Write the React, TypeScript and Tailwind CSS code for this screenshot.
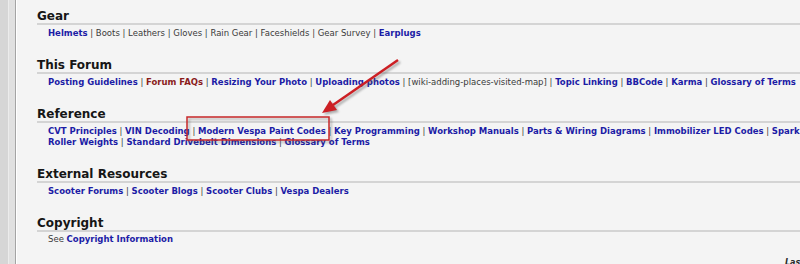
import React from "react";

const font = { fontFamily: '"DejaVu Sans", Verdana, sans-serif' };

function Sep() {
  return <span className="text-[#3a3a3a] font-normal"> | </span>;
}

function L({ children, red }: { children: React.ReactNode; red?: boolean }) {
  return (
    <span className={red ? "text-[#8a1c1c] font-bold" : "text-[#1c1ca6] font-bold"}>{children}</span>
  );
}

function T({ children }: { children: React.ReactNode }) {
  return <span className="text-[#3a3a3a] font-normal">{children}</span>;
}

function Section({ title, children }: { title: string; children: React.ReactNode }) {
  return (
    <div className="mb-[19px]">
      <div className="text-[12px] leading-[14px] font-bold text-[#161616] border-b-2 border-[#d4d4d4]">
        {title}
      </div>
      <div className="mt-[3px] pl-[11px] text-[8.5px] leading-[11px] whitespace-nowrap">{children}</div>
    </div>
  );
}

export default function App() {
  return (
    <div className="relative w-[800px] h-[264px] overflow-hidden flex bg-[#f4f4f4]" style={font}>
      <div className="w-[8px] bg-[#d6d6d6] shrink-0" />
      <div className="w-[1px] bg-[#ececec] shrink-0" />
      <div className="w-[6px] bg-[#e0e0e0] shrink-0" />
      <div className="w-[1px] bg-[#a4a4a4] shrink-0" />
      <div className="w-[1px] bg-white shrink-0" />
      <div className="flex-1 min-w-0 pl-[20px] pt-[9px] overflow-hidden">
        <Section title="Gear">
          <L>Helmets</L>
          <Sep />
          <T>Boots</T>
          <Sep />
          <T>Leathers</T>
          <Sep />
          <T>Gloves</T>
          <Sep />
          <T>Rain Gear</T>
          <Sep />
          <T>Faceshields</T>
          <Sep />
          <T>Gear Survey</T>
          <Sep />
          <L>Earplugs</L>
        </Section>
        <Section title="This Forum">
          <L>Posting Guidelines</L>
          <Sep />
          <L red>Forum FAQs</L>
          <Sep />
          <L>Resizing Your Photo</L>
          <Sep />
          <L>Uploading photos</L>
          <Sep />
          <T>[wiki-adding-places-visited-map]</T>
          <Sep />
          <L>Topic Linking</L>
          <Sep />
          <L>BBCode</L>
          <Sep />
          <L>Karma</L>
          <Sep />
          <L>Glossary of Terms</L>
        </Section>
        <Section title="Reference">
          <div>
            <L>CVT Principles</L>
            <Sep />
            <L>VIN Decoding</L>
            <Sep />
            <L>Modern Vespa Paint Codes</L>
            <Sep />
            <L>Key Programming</L>
            <Sep />
            <L>Workshop Manuals</L>
            <Sep />
            <L>Parts &amp; Wiring Diagrams</L>
            <Sep />
            <L>Immobilizer LED Codes</L>
            <Sep />
            <L>Spark Plugs</L>
            <Sep />
          </div>
          <div>
            <L>Roller Weights</L>
            <Sep />
            <L>Standard Drivebelt Dimensions</L>
            <Sep />
            <L>Glossary of Terms</L>
          </div>
        </Section>
        <Section title="External Resources">
          <L>Scooter Forums</L>
          <Sep />
          <L>Scooter Blogs</L>
          <Sep />
          <L>Scooter Clubs</L>
          <Sep />
          <L>Vespa Dealers</L>
        </Section>
        <div>
          <div className="text-[12px] leading-[14px] font-bold text-[#161616] border-b-2 border-[#d4d4d4]">
            Copyright
          </div>
          <div className="mt-[2px] pl-[11px] text-[8.5px] leading-[11px] whitespace-nowrap">
            <T>See </T>
            <L>Copyright Information</L>
          </div>
          <div className="mt-[13px] pl-[748px] text-[8px] leading-[10px] italic font-bold text-[#2a2a2a] whitespace-nowrap">
            Last edited
          </div>
        </div>
      </div>
      <svg className="absolute inset-0 pointer-events-none" width="800" height="264" viewBox="0 0 800 264">
        <defs>
          <filter id="sh" x="-20%" y="-20%" width="140%" height="140%">
            <feGaussianBlur stdDeviation="1.2" />
          </filter>
        </defs>
        <g opacity="0.45" filter="url(#sh)" transform="translate(2,2)">
          <line x1="398" y1="60" x2="333" y2="105" stroke="#555" strokeWidth="2.5" />
          <polygon points="322,113 337,110 330,100" fill="#555" />
          <rect x="187" y="117" width="142" height="23" fill="none" stroke="#555" strokeWidth="1.5" />
        </g>
        <line x1="398" y1="60" x2="333" y2="105" stroke="#cc1f24" strokeWidth="2.5" />
        <polygon points="322,113 337,110 330,100" fill="#cc1f24" />
        <rect x="187" y="117" width="142" height="23" fill="none" stroke="#c8282a" strokeWidth="1.5" />
      </svg>
    </div>
  );
}
